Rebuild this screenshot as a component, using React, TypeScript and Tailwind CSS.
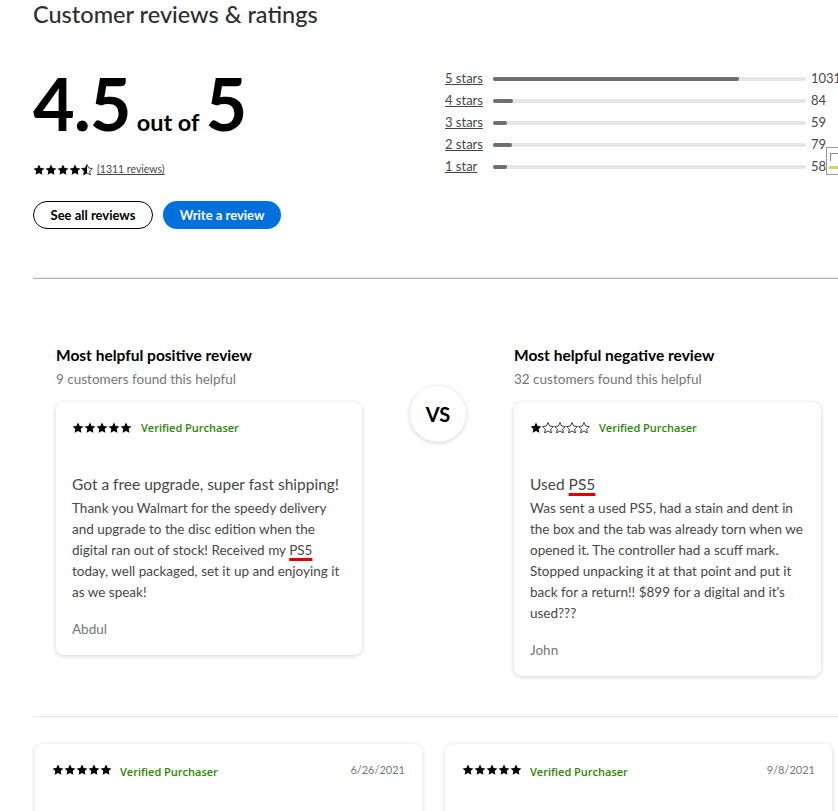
import React from "react";

const STAR = "M12 1.2l3.3 6.9 7.5.9-5.5 5.2 1.5 7.5L12 18l-6.8 3.7 1.5-7.5L1.2 9l7.5-.9L12 1.2z";

function Star({ kind = "full" }: { kind?: "full" | "half" | "empty" }) {
  return (
    <svg viewBox="0 0 24 24" className="w-[12px] h-[12px] shrink-0">
      <defs>
        <clipPath id="half-left">
          <rect x="0" y="0" width="12" height="24" />
        </clipPath>
      </defs>
      {kind === "full" && <path d={STAR} fill="#000" />}
      {kind === "empty" && <path d={STAR} fill="none" stroke="#000" strokeWidth="1.5" strokeLinejoin="round" />}
      {kind === "half" && (
        <>
          <path d={STAR} fill="none" stroke="#000" strokeWidth="1.5" strokeLinejoin="round" />
          <path d={STAR} fill="#000" clipPath="url(#half-left)" />
        </>
      )}
    </svg>
  );
}

function Stars({ rating }: { rating: number }) {
  return (
    <div className="flex items-center">
      {[1, 2, 3, 4, 5].map((i) => (
        <Star key={i} kind={rating >= i ? "full" : rating >= i - 0.5 ? "half" : "empty"} />
      ))}
    </div>
  );
}

const bars = [
  { label: "5 stars", count: 1031 },
  { label: "4 stars", count: 84 },
  { label: "3 stars", count: 59 },
  { label: "2 stars", count: 79 },
  { label: "1 star", count: 58 },
];

function Verified() {
  return (
    <span className="font-['Open_Sans',sans-serif] text-[11px] font-semibold text-[#2a8703]">Verified Purchaser</span>
  );
}

function HighlightCard({
  rating,
  title,
  body,
  author,
}: {
  rating: number;
  title: React.ReactNode;
  body: React.ReactNode;
  author: string;
}) {
  return (
    <div className="rounded-lg bg-white shadow-[0_1px_5px_rgba(0,0,0,0.18)] px-4 pt-[20px] pb-[15px]">
      <div className="flex items-center gap-[9px] h-[12px]">
        <Stars rating={rating} />
        <Verified />
      </div>
      <h4 className="mt-[38px] text-[15.5px] leading-[24px] text-[#46474a]">{title}</h4>
      <p className="mt-[2px] text-[13.5px] leading-[21px] text-[#46474a]">{body}</p>
      <p className="mt-[16px] text-[13.5px] leading-[21px] text-[#74767c]">{author}</p>
    </div>
  );
}

function Squiggle({ children }: { children: React.ReactNode }) {
  return (
    <span className="underline decoration-[#e00000] decoration-[3px] underline-offset-[3px]">{children}</span>
  );
}

export default function App() {
  return (
    <div className="relative w-[838px] h-[811px] overflow-hidden bg-white pl-[33px] font-['Lato',sans-serif]">
      <h2 className="-mt-[2px] text-[23.5px] leading-[32px] font-medium text-[#2e2f32]">Customer reviews &amp; ratings</h2>

      <div className="flex mt-[37px]">
        <div className="w-[412px] shrink-0">
          <div className="flex items-baseline text-black font-bold">
            <span className="text-[72px] leading-none tracking-[-1px]">4.5</span>
            <span className="ml-[6px] mr-[6px] text-[23.5px]">out of</span>
            <span className="text-[72px] leading-none">5</span>
          </div>
          <div className="flex items-center gap-[4px] mt-[23px] h-[14px]">
            <Stars rating={4.5} />
            <a className="text-[10.5px] text-[#46474a] underline">(1311 reviews)</a>
          </div>
          <div className="flex gap-[10px] mt-[24px]">
            <button className="w-[120px] h-[28px] rounded-full border border-black text-[13px] font-bold text-black">
              See all reviews
            </button>
            <button className="w-[118px] h-[28px] rounded-full bg-[#0071dc] text-[13px] font-bold text-white">
              Write a review
            </button>
          </div>
        </div>

        <div className="flex flex-col mt-[1px]">
          {bars.map((b) => (
            <div key={b.label} className="flex items-center h-[22px]">
              <a className="w-[48px] text-[13px] text-[#46474a] underline">{b.label}</a>
              <div className="w-[313px] h-[4px] rounded-full bg-[#e6e6e6]">
                <div className="h-[4px] rounded-full bg-[#6d6e71]" style={{ width: `${Math.max(4, (b.count / 1311) * 100)}%` }} />
              </div>
              <span className="ml-[5px] text-[13px] text-[#46474a]">{b.count}</span>
            </div>
          ))}
        </div>
      </div>

      <div className="mt-[48px] h-[2px] border-t border-[#efefef] bg-[#b0b0b0]" />

      <div className="grid grid-cols-[306px_152px_307px] items-start ml-[23px] mt-[66px]">
        <div>
          <h3 className="text-[15.5px] leading-[20px] font-bold text-black">Most helpful positive review</h3>
          <p className="mt-[4px] text-[13.5px] leading-[20px] text-[#74767c]">9 customers found this helpful</p>
          <div className="mt-[13px]">
            <HighlightCard
              rating={5}
              title="Got a free upgrade, super fast shipping!"
              body={
                <>
                  Thank you Walmart for the speedy delivery and upgrade to the disc edition when the digital ran out of
                  stock! Received my <Squiggle>PS5</Squiggle> today, well packaged, set it up and enjoying it as we
                  speak!
                </>
              }
              author="Abdul"
            />
          </div>
        </div>

        <div className="flex justify-center pt-[41px]">
          <div className="w-[56px] h-[56px] rounded-full bg-white shadow-[0_1px_5px_rgba(0,0,0,0.18)] flex items-center justify-center text-[20px] font-bold text-black">
            VS
          </div>
        </div>

        <div>
          <h3 className="text-[15.5px] leading-[20px] font-bold text-black">Most helpful negative review</h3>
          <p className="mt-[4px] text-[13.5px] leading-[20px] text-[#74767c]">32 customers found this helpful</p>
          <div className="mt-[13px]">
            <HighlightCard
              rating={1}
              title={
                <>
                  Used <Squiggle>PS5</Squiggle>
                </>
              }
              body="Was sent a used PS5, had a stain and dent in the box and the tab was already torn when we opened it. The controller had a scuff mark. Stopped unpacking it at that point and put it back for a return!! $899 for a digital and it's used???"
              author="John"
            />
          </div>
        </div>
      </div>

      <div className="mt-[40px] h-px bg-[#e6e6e6]" />

      <div className="flex gap-[23px] ml-[2px] mt-[27px]">
        {[
          { date: "6/26/2021" },
          { date: "9/8/2021" },
        ].map((r) => (
          <div
            key={r.date}
            className="w-[387px] h-[120px] shrink-0 rounded-lg bg-white shadow-[0_1px_5px_rgba(0,0,0,0.16)] px-[17px] pt-[20px]"
          >
            <div className="flex items-center h-[12px]">
              <Stars rating={5} />
              <span className="ml-[8px]">
                <Verified />
              </span>
              <span className="ml-auto text-[11px] text-[#74767c]">{r.date}</span>
            </div>
          </div>
        ))}
      </div>

      <div className="absolute left-[826px] top-[147px] w-[14px] h-[28px] border border-[#9a9a9a] bg-white">
        <div className="mt-[5px] ml-[3px] w-[8px] h-[8px] border-t border-l border-[#888]" />
        <div className="mt-[5px] ml-[2px] w-[10px] h-[3px] bg-[#c8d66a]" />
      </div>
    </div>
  );
}
